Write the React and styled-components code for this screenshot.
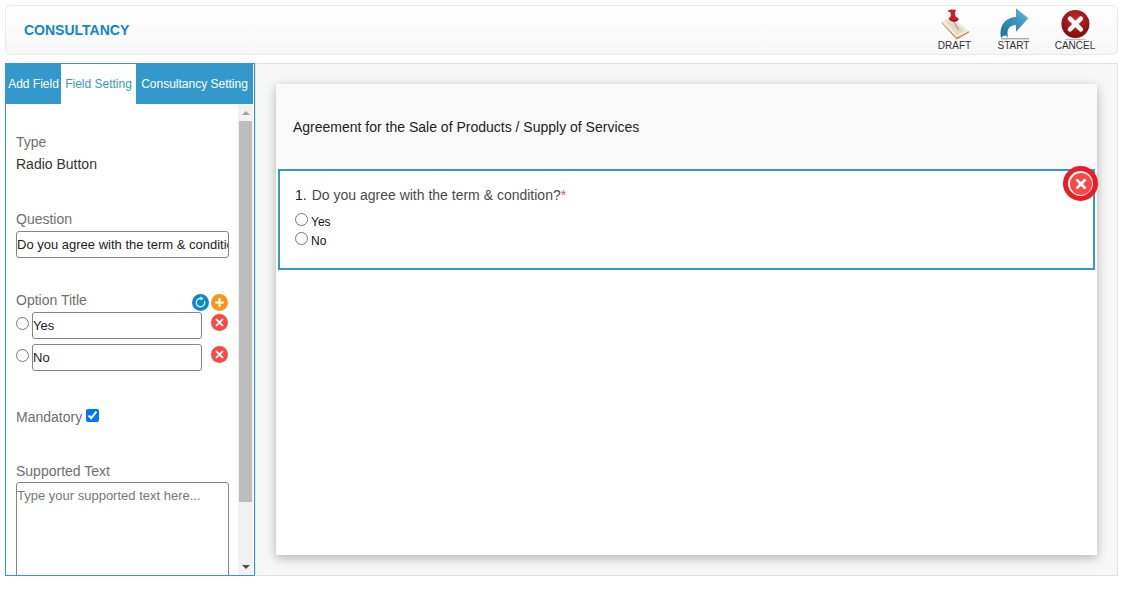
import React from "react";
import styled, { createGlobalStyle } from "styled-components";

const GlobalStyle = createGlobalStyle`
  html, body {
    margin: 0;
    padding: 0;
    background: #fff;
    font-family: "Liberation Sans", Arial, sans-serif;
  }
  * { box-sizing: border-box; }
`;

const Page = styled.div`
  width: 1125px;
  height: 595px;
  padding: 5px 7px 0 5px;
  display: flex;
  flex-direction: column;
  gap: 8px;
  overflow: hidden;
`;

const Header = styled.header`
  height: 50px;
  display: flex;
  align-items: center;
  justify-content: space-between;
  border: 1px solid #e9e9e9;
  border-radius: 5px;
  background: linear-gradient(#ffffff, #f6f6f6);
  padding: 0 10px 0 18px;
`;

const Title = styled.h1`
  margin: 0;
  font-size: 14px;
  font-weight: 700;
  color: #0f87cf;
`;

const Actions = styled.div`
  display: flex;
`;

const Action = styled.button`
  width: ${(p) => p.$w}px;
  height: 48px;
  padding: 2px 0 0;
  border: 0;
  background: none;
  display: flex;
  flex-direction: column;
  align-items: center;
  font-family: inherit;
  font-size: 10px;
  color: #333;
  line-height: 10px;
  svg { display: block; height: 33px; }
`;

const Main = styled.div`
  height: 513px;
  display: flex;
`;

const Sidebar = styled.aside`
  width: 250px;
  flex-shrink: 0;
  border: 1px solid #3399cc;
  display: flex;
  flex-direction: column;
  overflow: hidden;
`;

const Tabs = styled.div`
  height: 40px;
  flex-shrink: 0;
  display: flex;
  background: #3399cc;
  margin-right: 1px;
`;

const Tab = styled.div`
  width: ${(p) => p.$w}px;
  display: flex;
  align-items: center;
  justify-content: center;
  font-size: 12px;
  white-space: nowrap;
  color: ${(p) => (p.$active ? "#3399cc" : "#fff")};
  background: ${(p) => (p.$active ? "#fff" : "transparent")};
`;

const SideBody = styled.div`
  flex: 1;
  min-height: 0;
  display: flex;
`;

const Form = styled.div`
  width: 232px;
  padding: 30px 0 0 10px;
  overflow: hidden;
`;

const Label = styled.div`
  font-size: 14px;
  line-height: 16px;
  color: #6f6f6f;
`;

const Value = styled.div`
  font-size: 14px;
  line-height: 16px;
  color: #333;
  margin-top: 6px;
`;

const Section = styled.div`
  margin-top: ${(p) => p.$top}px;
`;

const TextInput = styled.input`
  display: block;
  width: ${(p) => p.$w}px;
  height: 27px;
  padding: 0;
  border: 1px solid #858585;
  border-radius: 3px;
  font-family: inherit;
  font-size: 13px;
  color: #222;
  background: #fff;
  margin-top: ${(p) => p.$top || 0}px;
`;

const OptionHead = styled.div`
  width: 213px;
  display: flex;
  align-items: flex-end;
  justify-content: space-between;
`;

const RoundIcons = styled.div`
  display: flex;
  gap: 2px;
  margin-bottom: -3px;
  margin-right: 1px;
`;

const OptionRow = styled.div`
  display: flex;
  align-items: flex-start;
  margin-top: ${(p) => p.$top}px;
`;

const Radio = styled.input.attrs({ type: "radio" })`
  width: 13px;
  height: 13px;
  margin: ${(p) => p.$m || "5px 3px 0 0"};
  flex-shrink: 0;
`;

const RemoveWrap = styled.div`
  margin: 2px 0 0 9px;
  line-height: 0;
`;

const MandatoryRow = styled.div`
  display: flex;
  align-items: flex-start;
  gap: 4px;
`;

const Check = styled.input.attrs({ type: "checkbox" })`
  width: 13px;
  height: 13px;
  margin: 0;
`;

const TextArea = styled.textarea`
  display: block;
  width: 213px;
  height: 120px;
  margin-top: 3px;
  padding: 5px 0;
  border: 1px solid #858585;
  border-radius: 3px;
  resize: none;
  font-family: inherit;
  font-size: 13px;
  line-height: 15px;
  &::placeholder { color: #777; opacity: 1; }
`;

const Scrollbar = styled.div`
  width: 15px;
  margin-right: 1px;
  background: #f1f1f1;
  display: flex;
  flex-direction: column;
  align-items: center;
`;

const ScrollArrow = styled.div`
  height: 17px;
  flex-shrink: 0;
  display: flex;
  align-items: center;
  justify-content: center;
  &::after {
    content: "";
    border-left: 4px solid transparent;
    border-right: 4px solid transparent;
    ${(p) => (p.$down ? "border-top: 4px solid #505050;" : "border-bottom: 4px solid #a3a3a3;")}
  }
`;

const ScrollThumb = styled.div`
  width: 13px;
  height: 381px;
  background: #bdbdbd;
`;

const ScrollTrack = styled.div`
  flex: 1;
`;

const Canvas = styled.main`
  flex: 1;
  background: #f7f7f7;
  border: 1px solid #e2e2e2;
  padding: 20px;
`;

const Sheet = styled.div`
  height: 471px;
  background: #fff;
  box-shadow: 0 3px 10px rgba(0, 0, 0, 0.28);
`;

const SheetTitle = styled.div`
  height: 85px;
  background: #f9f9f9;
  padding: 35px 17px 0;
  font-size: 14px;
  line-height: 16px;
  color: #222;
`;

const QuestionBox = styled.section`
  position: relative;
  height: 101px;
  margin: 0 2px;
  border: 2px solid #3399cc;
  padding: 16px 15px 0;
`;

const QuestionText = styled.div`
  font-size: 14px;
  line-height: 16px;
  color: #4a4a4a;
  margin-bottom: 9px;
  b { font-weight: 400; color: #222; margin-right: 5px; }
  i { font-style: normal; color: #e25c5c; }
`;

const Answer = styled.label`
  display: flex;
  align-items: flex-start;
  height: 19px;
  font-size: 12px;
  line-height: 18px;
  color: #111;
  padding-top: 1px;
`;

const CloseBadge = styled.div`
  position: absolute;
  top: -5px;
  right: -5px;
  width: 35px;
  height: 35px;
  border-radius: 50%;
  border: 5px solid #ed1c24;
  background: #fff;
  display: flex;
  align-items: center;
  justify-content: center;
`;

function RoundX({ size = 17 }) {
  return (
    <svg width={size} height={size} viewBox="0 0 17 17">
      <circle cx="8.5" cy="8.5" r="8.5" fill="#fb4747" />
      <path d="M5.6 5.6l5.8 5.8M11.4 5.6l-5.8 5.8" stroke="#fff" strokeWidth="2" strokeLinecap="round" />
    </svg>
  );
}

function RefreshIcon() {
  return (
    <svg width="17" height="17" viewBox="0 0 17 17">
      <circle cx="8.5" cy="8.5" r="8.5" fill="#0f87cf" />
      <path d="M12.4 7A4.2 4.2 0 1 1 8.8 4.4" fill="none" stroke="#fff" strokeWidth="1.2" />
      <path d="M8.4 2.4l3.2 2-3 2z" fill="#fff" />
    </svg>
  );
}

function PlusIcon() {
  return (
    <svg width="17" height="17" viewBox="0 0 17 17">
      <circle cx="8.5" cy="8.5" r="8.5" fill="#f7961c" />
      <path d="M8.5 4.8v7.4M4.8 8.5h7.4" stroke="#fff" strokeWidth="2" strokeLinecap="round" />
    </svg>
  );
}

function DraftIcon() {
  return (
    <svg width="32" height="33" viewBox="0 0 32 33">
      {/* book with orange page edge */}
      <path d="M2.7 15 L17.7 31.5 L30 24.5 L30 23 L17.7 29.5 L2.7 13.7 Z" fill="#c9853f" />
      <path d="M2.7 13.7 L11 8 L30 23 L17.7 29.5 Z" fill="#efe9da" />
      <path d="M7 14 L11.5 11 L25.5 22.5 L18 26.5 Z" fill="#ded8c8" />
      {/* pin */}
      <path d="M14 12 L19.5 22" stroke="#a0a0a0" strokeWidth="1.2" />
      <path d="M8.3 3.2 C10 1.4 14.5 1 17.3 2.2 L15.8 4.6 L16.6 8.6 L19.8 10.4 C19.4 12.8 17.4 14 14.6 13.6 C12.4 13.2 10.6 12 9.6 10.4 L12 8 L11.4 4.2 Z" fill="#c8202b" />
      <path d="M10.6 10.8 C12.2 12.6 15.4 13.4 18.2 12" stroke="#8e1119" strokeWidth="1.1" fill="none" />
    </svg>
  );
}

function StartIcon() {
  return (
    <svg width="34" height="33" viewBox="0 0 34 33">
      <defs>
        <linearGradient id="arrowFill" x1="0" y1="1" x2="1" y2="0">
          <stop offset="0" stopColor="#1f6f97" />
          <stop offset="0.55" stopColor="#3a94bd" />
          <stop offset="1" stopColor="#6fb9d8" />
        </linearGradient>
      </defs>
      <rect x="4" y="30" width="28" height="1.4" fill="#aaa" />
      <path d="M4 30 C2 20 6 10 19 8.7 L19 0.3 L31.3 10.3 L19 23.7 L19 17 C13 17 9 21 11 29.7 C9 26.5 6 27 4 30 Z" fill="url(#arrowFill)" />
    </svg>
  );
}

function CancelIcon() {
  return (
    <svg width="30" height="33" viewBox="0 0 30 33">
      <defs>
        <radialGradient id="cancelFill" cx="0.5" cy="0.35" r="0.7">
          <stop offset="0" stopColor="#c92a2a" />
          <stop offset="1" stopColor="#7a0a0a" />
        </radialGradient>
      </defs>
      <circle cx="15.4" cy="16" r="14" fill="url(#cancelFill)" />
      <path d="M10 10.6l10.8 10.8M20.8 10.6L10 21.4" stroke="#fff" strokeWidth="4.6" strokeLinecap="round" />
      <ellipse cx="15.4" cy="31.5" rx="11" ry="0.8" fill="#bbb" />
    </svg>
  );
}

export default function App() {
  return (
    <>
      <GlobalStyle />
      <Page>
        <Header>
          <Title>CONSULTANCY</Title>
          <Actions>
            <Action $w={59}>
              <DraftIcon />
              DRAFT
            </Action>
            <Action $w={59}>
              <StartIcon />
              START
            </Action>
            <Action $w={64}>
              <CancelIcon />
              CANCEL
            </Action>
          </Actions>
        </Header>
        <Main>
          <Sidebar>
            <Tabs>
              <Tab $w={55}>Add Field</Tab>
              <Tab $w={75} $active>Field Setting</Tab>
              <Tab $w={117}>Consultancy Setting</Tab>
            </Tabs>
            <SideBody>
              <Form>
                <Label>Type</Label>
                <Value>Radio Button</Value>
                <Section $top={39}>
                  <Label>Question</Label>
                  <TextInput $w={213} $top={4} readOnly value="Do you agree with the term & condition?" />
                </Section>
                <Section $top={34}>
                  <OptionHead>
                    <Label>Option Title</Label>
                    <RoundIcons>
                      <RefreshIcon />
                      <PlusIcon />
                    </RoundIcons>
                  </OptionHead>
                  <OptionRow $top={4}>
                    <Radio name="opt" />
                    <TextInput $w={170} readOnly value="Yes" />
                    <RemoveWrap><RoundX /></RemoveWrap>
                  </OptionRow>
                  <OptionRow $top={5}>
                    <Radio name="opt" />
                    <TextInput $w={170} readOnly value="No" />
                    <RemoveWrap><RoundX /></RemoveWrap>
                  </OptionRow>
                </Section>
                <Section $top={38}>
                  <MandatoryRow>
                    <Label>Mandatory</Label>
                    <Check defaultChecked />
                  </MandatoryRow>
                </Section>
                <Section $top={38}>
                  <Label>Supported Text</Label>
                  <TextArea placeholder="Type your supported text here..." />
                </Section>
              </Form>
              <ScrollTrack />
              <Scrollbar>
                <ScrollArrow />
                <ScrollThumb />
                <ScrollTrack />
                <ScrollArrow $down />
              </Scrollbar>
            </SideBody>
          </Sidebar>
          <Canvas>
            <Sheet>
              <SheetTitle>Agreement for the Sale of Products / Supply of Services</SheetTitle>
              <QuestionBox>
                <QuestionText>
                  <b>1.</b>Do you agree with the term &amp; condition?<i>*</i>
                </QuestionText>
                <Answer>
                  <Radio name="answer" $m="0 3px 0 0" />
                  Yes
                </Answer>
                <Answer>
                  <Radio name="answer" $m="0 3px 0 0" />
                  No
                </Answer>
                <CloseBadge>
                  <RoundX size={22} />
                </CloseBadge>
              </QuestionBox>
            </Sheet>
          </Canvas>
        </Main>
      </Page>
    </>
  );
}
